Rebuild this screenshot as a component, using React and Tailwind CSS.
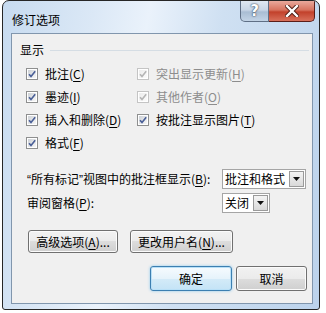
import React from 'react';

const FONT = { fontFamily: '"Noto Sans CJK SC", "Microsoft YaHei", sans-serif' };
const LATIN = { fontFamily: '"Liberation Sans", Arial, sans-serif' };

function Check({ checked = true, disabled = false }) {
  const border = disabled ? '#c4c4c4' : '#8e8f8f';
  const mark = disabled ? '#b5b5b5' : '#4a5f97';
  return (
    <svg width="12" height="12" viewBox="0 0 12 12" className="shrink-0">
      <defs>
        <linearGradient id={disabled ? 'cbd' : 'cbe'} x1="0" y1="0" x2="1" y2="1">
          <stop offset="0" stopColor={disabled ? '#ececec' : '#cdd1d6'} />
          <stop offset="1" stopColor={disabled ? '#fbfbfb' : '#f7f7f7'} />
        </linearGradient>
      </defs>
      <rect x="0.5" y="0.5" width="11" height="11" fill="#fff" stroke={border} />
      <rect x="2" y="2" width="8" height="8" fill={`url(#${disabled ? 'cbd' : 'cbe'})`} />
      {checked && (
        <path d="M3 6.2 L5 8.4 L9.2 3.2" fill="none" stroke={mark} strokeWidth="1.6" />
      )}
    </svg>
  );
}

function Key({ k }) {
  return (
    <>
      (<span className="underline underline-offset-2">{k}</span>)
    </>
  );
}

function CheckRow({ label, k, disabled }) {
  return (
    <div className="flex items-center h-[23px]">
      <Check disabled={disabled} />
      <span className={`ml-[7px] ${disabled ? 'text-[#8d8d8d]' : 'text-black'}`}>
        {label}
        <Key k={k} />
      </span>
    </div>
  );
}

function Select({ value, width }) {
  return (
    <div
      className="flex items-center h-[20px] border border-[#a5a5a5] bg-white"
      style={{ width }}
    >
      <span className="flex-1 pl-[2px] leading-[16px] whitespace-nowrap">{value}</span>
      <div className="w-[15px] h-[16px] mr-[1px] border border-[#9a9a9a] bg-[linear-gradient(to_bottom,#f4f4f4,#d9d9d9)] flex items-center justify-center">
        <svg width="7" height="4" viewBox="0 0 7 4">
          <path d="M0 0 H7 L3.5 4 Z" fill="#111" />
        </svg>
      </div>
    </div>
  );
}

function Button({ children, className = '', focused }) {
  return (
    <div
      className={`flex items-center justify-center rounded-[3px] border leading-[16px] ${
        focused
          ? 'border-[#3c7fb1] bg-[linear-gradient(to_bottom,#f6fbfe_0%,#e6f3fb_50%,#d4ebf8_50%,#c4e3f6_100%)] shadow-[inset_0_0_0_1px_#b9e0f7,0_0_3px_#8cc8ee]'
          : 'border-[#707070] bg-[linear-gradient(to_bottom,#f2f2f2_0%,#ebebeb_50%,#dddddd_50%,#cfcfcf_100%)] shadow-[inset_0_0_0_1px_#fbfbfb]'
      } ${className}`}
    >
      {children}
    </div>
  );
}

export default function App() {
  return (
    <div className="w-[326px] h-[313px] bg-white pl-[2px] text-[12px] text-black" style={FONT}>
      <div className="relative w-[318px] h-[310px] border border-[#262626] rounded-t-[7px] rounded-b-[3px] bg-[linear-gradient(100deg,#c7dbf0_0%,#dbe8f6_25%,#eaf2fb_40%,#cfe0f2_60%,#bcd3ec_100%)] flex flex-col overflow-hidden">
        <div className="h-[32px] flex justify-between shrink-0">
          <div className="pl-[9px] pt-[11px] leading-[16px] text-[12px] text-black">修订选项</div>
          <div className="flex mr-[4px] h-[21px]">
            <div className="w-[29px] h-[21px] rounded-bl-[5px] border border-[#5f6f85] border-t-0 bg-[linear-gradient(to_bottom,#dfe8f2_0%,#c8d6e6_45%,#a9bdd3_55%,#c3d4e6_100%)] flex items-center justify-center">
              <span className="text-white text-[15px] font-bold leading-none [text-shadow:0_0_2px_#2f3f55,0_0_1px_#2f3f55]" style={{ fontFamily: '"DejaVu Sans", sans-serif' }}>?</span>
            </div>
            <div className="w-[46px] h-[21px] rounded-br-[5px] border border-[#5b1d18] border-t-0 border-l-0 bg-[linear-gradient(to_bottom,#e9a99c_0%,#d7735f_45%,#c2412b_55%,#d8705b_100%)] flex items-center justify-center">
              <svg width="14" height="12" viewBox="0 0 14 12">
                <path d="M2 1 L12 11 M12 1 L2 11" stroke="#4a1a12" strokeWidth="4.2" strokeLinecap="square" />
                <path d="M2 1 L12 11 M12 1 L2 11" stroke="#fff" strokeWidth="2.4" strokeLinecap="square" />
              </svg>
            </div>
          </div>
        </div>

        <div className="ml-[8px] w-[302px] h-[271px] border border-[#8196ad] bg-[#f0f0f0] flex flex-col shrink-0">
          <div className="flex items-center pt-[8px] pl-[8px] pr-[3px]">
            <span className="leading-[16px]">显示</span>
            <div className="flex-1 h-px bg-[#d5dde4] ml-[6px] mt-[1px]" />
          </div>

          <div className="mt-[4px] pl-[14px] grid grid-cols-[111px_1fr]">
            <CheckRow label="批注" k="C" />
            <CheckRow label="突出显示更新" k="H" disabled />
            <CheckRow label="墨迹" k="I" />
            <CheckRow label="其他作者" k="O" disabled />
            <CheckRow label="插入和删除" k="D" />
            <CheckRow label="按批注显示图片" k="T" />
            <CheckRow label="格式" k="F" />
          </div>

          <div className="mt-[15px] pl-[15px] flex flex-col gap-[4px]">
            <div className="flex items-center">
              <span className="w-[195px] whitespace-nowrap">
                <span style={LATIN}>“</span>所有标记<span style={LATIN}>”</span>视图中的批注框显示<Key k="B" />:
              </span>
              <Select value="批注和格式" width="84px" />
            </div>
            <div className="flex items-center">
              <span className="w-[195px] whitespace-nowrap">
                审阅窗格<Key k="P" />:
              </span>
              <Select value="关闭" width="48px" />
            </div>
          </div>

          <div className="mt-[17px] pl-[16px] flex gap-[12px]">
            <Button className="w-[90px] h-[23px]">
              高级选项<Key k="A" />...
            </Button>
            <Button className="w-[103px] h-[23px]">
              更改用户名<Key k="N" />...
            </Button>
          </div>

          <div className="mt-[13px] pr-[5px] flex justify-end gap-[4px]">
            <Button focused className="w-[82px] h-[25px]">确定</Button>
            <Button className="w-[71px] h-[25px]">取消</Button>
          </div>
        </div>
      </div>
    </div>
  );
}
